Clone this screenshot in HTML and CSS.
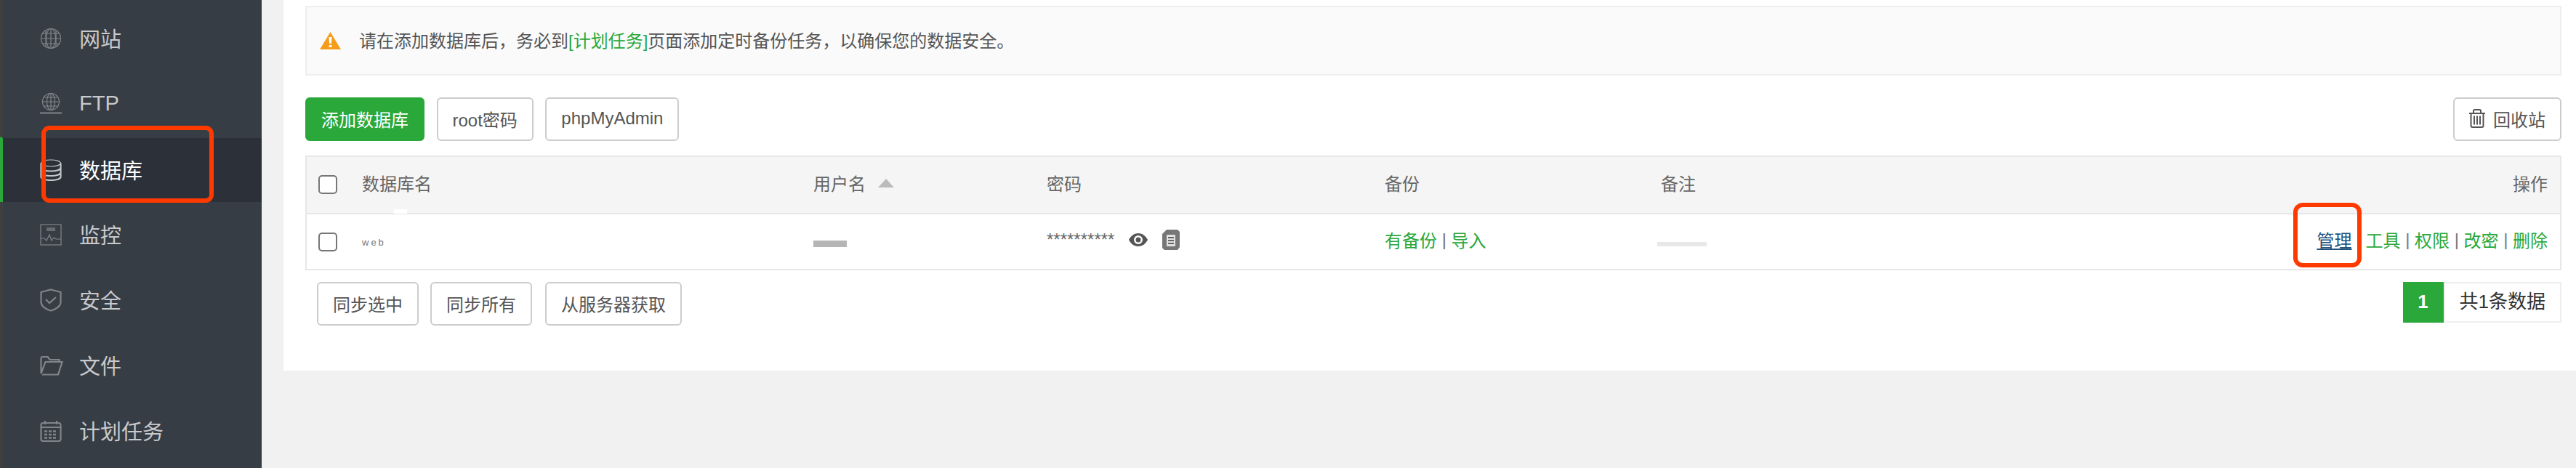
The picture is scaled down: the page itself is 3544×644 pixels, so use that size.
FILE: index.html
```html
<!DOCTYPE html>
<html lang="zh-CN">
<head>
	<meta charset="utf-8">
	<title>数据库管理</title>
	<link rel="stylesheet" href="styles.css">
</head>
<body>
	<div class="page">
		<div class="sidebar">
			<div class="menu-item">
				<svg class="menu-icon" viewBox="0 0 30 30"><circle cx="15" cy="15" r="13.5"/><ellipse cx="15" cy="15" rx="6.5" ry="13.5"/><path d="M15 1.5v27M3 8h24M1.5 15h27M3 22h24M8 3v24M22 3v24"/></svg>
				<span>网站</span>
			</div>
			<div class="menu-item">
				<svg class="menu-icon" viewBox="0 0 30 30"><circle cx="15" cy="12" r="11.5"/><ellipse cx="15" cy="12" rx="5.5" ry="11.5"/><path d="M15 .5v23M5 6h20M3.500 12h23M5 18h20"/><path class="thick" d="M0 27.500h30M11 27.500h8"/></svg>
				<span>FTP</span>
			</div>
			<div class="menu-item active">
				<svg class="menu-icon" viewBox="0 0 30 30"><ellipse cx="15" cy="5.500" rx="13.500" ry="4.500"/><path class="thick" d="M1.500 5.500v19c0 2.500 6 4.500 13.500 4.500s13.500-2 13.500-4.500v-19M1.500 12c0 2.500 6 4.500 13.500 4.500s13.500-2 13.500-4.500M1.500 18.500c0 2.500 6 4.500 13.500 4.500s13.500-2 13.500-4.500"/></svg>
				<span>数据库</span>
			</div>
			<div class="menu-item">
				<svg class="menu-icon" viewBox="0 0 30 30"><rect x="1" y="1" width="28" height="28"/><path d="M1 20h5l3 3 4-8 3 8 3-4 3 2h7"/><rect class="fill" x="9" y="5" width="12" height="5"/></svg>
				<span>监控</span>
			</div>
			<div class="menu-item">
				<svg class="menu-icon shield" viewBox="0 0 30 32"><path class="thick" d="M15 1.500 28.500 5v14c0 5-6 9.500-13.500 11.500C7.500 28.500 1.500 24 1.500 19V5z"/><path class="thick" d="m8 15 5 5 9-8"/></svg>
				<span>安全</span>
			</div>
			<div class="menu-item">
				<svg class="menu-icon folder" viewBox="0 0 32 27"><path class="thick" d="M1.500 24V3a2 2 0 0 1 2-2h7l3 4h13v3M3 25.500h22l5.500-17.500H7.500L1.500 24"/></svg>
				<span>文件</span>
			</div>
			<div class="menu-item">
				<svg class="menu-icon" viewBox="0 0 30 30"><rect class="thick" x="1.500" y="4" width="27" height="25" rx="3"/><path class="thick" d="M7 1v5M23 1v5M1.500 10h27"/><path class="dashes" d="M6 15.500h18M6 20h18M6 24.500h18"/></svg>
				<span>计划任务</span>
			</div>
		</div>

		<div class="main">
			<div class="panel">
				<div class="alert">
					<svg class="alert-icon" viewBox="0 0 29 24"><path class="alert-bg" d="M14.500 0 29 24H0z"/><path class="alert-mark" d="M12.500 7h4l-.6 9h-2.800zM12.700 18h3.600v3h-3.600z"/></svg>
					<span class="alert-text">请在添加数据库后，务必到<a class="green" href="#">[计划任务]</a>页面添加定时备份任务，以确保您的数据安全。</span>
				</div>

				<div class="toolbar">
					<button class="btn btn-green">添加数据库</button>
					<button class="btn">root密码</button>
					<button class="btn">phpMyAdmin</button>
					<button class="btn btn-recycle">
						<svg class="trash" viewBox="0 0 22 26"><path d="M0 6h22M6 6V2.500a1.500 1.500 0 0 1 1.500-1.500h7A1.500 1.500 0 0 1 16 2.500V6M2.500 6v17a2 2 0 0 0 2 2h13a2 2 0 0 0 2-2V6M7 9.500v12M11 9.500v12M15 9.500v12"/></svg>
						回收站
					</button>
				</div>

				<div class="table-box">
					<table>
						<colgroup>
							<col class="c-check"><col class="c-name"><col class="c-user"><col class="c-pass"><col class="c-backup"><col class="c-note"><col>
						</colgroup>
						<thead>
							<tr>
								<th><span class="check"></span></th>
								<th>数据库名<i class="patch"></i></th>
								<th>用户名<i class="sort"></i></th>
								<th>密码</th>
								<th>备份</th>
								<th>备注</th>
								<th class="right">操作</th>
							</tr>
						</thead>
						<tbody>
							<tr>
								<td><span class="check"></span></td>
								<td><span class="redact redact-name">web</span></td>
								<td><span class="redact redact-user"></span></td>
								<td>
									<div class="pass">
										<span class="stars">**********</span>
										<svg class="eye" viewBox="0 0 26 20"><path d="M13 1C7 1 2.500 5 0 10c2.500 5 7 9 13 9s10.500-4 13-9c-2.500-5-7-9-13-9zm0 15a6 6 0 1 1 0-12 6 6 0 0 1 0 12z"/><circle cx="13" cy="10" r="3.500"/></svg>
										<svg class="copy" viewBox="0 0 24 28"><path d="M6 0h15l3 3v21l-3 4H3l-3-3V6z"/><rect class="copy-page" x="6" y="7" width="12" height="16" rx="1"/><path class="copy-lines" d="M8 11h8M8 15h8M8 19h8"/></svg>
									</div>
								</td>
								<td>
									<div class="links"><a class="green" href="#">有备份</a><span class="sep">|</span><a class="green" href="#">导入</a></div>
								</td>
								<td><span class="redact redact-note"></span></td>
								<td>
									<div class="links ops">
										<a class="manage" href="#">管理</a>
										<a class="green first-op" href="#">工具</a><span class="sep">|</span>
										<a class="green" href="#">权限</a><span class="sep">|</span>
										<a class="green" href="#">改密</a><span class="sep">|</span>
										<a class="green" href="#">删除</a>
									</div>
								</td>
							</tr>
						</tbody>
					</table>
				</div>

				<div class="footer">
					<div class="footer-btns">
						<button class="btn">同步选中</button>
						<button class="btn">同步所有</button>
						<button class="btn btn-fetch">从服务器获取</button>
					</div>
					<div class="pager">
						<span class="pager-num">1</span>
						<span class="pager-total">共1条数据</span>
					</div>
				</div>
			</div>
		</div>

		<!-- annotations drawn on top of the screenshot -->
		<div class="mark mark-menu"></div>
		<div class="mark mark-manage"></div>
	</div>
</body>
</html>
```

FILE: styles.css
```css
* {
	box-sizing: border-box;
}
html, body {
	margin: 0;
	height: 100%;
	overflow: hidden;
}
body {
	background-color: #f1f1f1;
	font-family: "Liberation Sans", "Noto Sans CJK SC", sans-serif;
	font-size: 24px;
	color: #555;
}
a {
	text-decoration: none;
}
.page {
	position: relative;
	display: flex;
	height: 644px;
}

/* sidebar */
.sidebar {
	flex: none;
	width: 360px;
	padding-top: 8px;
	background-color: #373d45;
	border-left: 4px solid #3f3f3f;
}
.menu-item {
	display: flex;
	align-items: center;
	gap: 24px;
	height: 90px;
	padding-left: 51px;
	font-size: 29px;
	color: #c8c9cb;
}
.menu-item span {
	margin-bottom: 2px;
}
.menu-item.active {
	margin-left: -4px;
	padding-left: 51px;
	color: #fff;
	background-color: #2c3038;
	background-clip: padding-box;
	border-top: 2px solid #373d45;
	border-left: 4px solid #2aa83a;
}
.menu-icon {
	flex: none;
	width: 30px;
	height: 30px;
	fill: none;
	stroke: #80858a;
	stroke-width: 1.2;
}
.menu-icon .thick {
	stroke-width: 2.200;
}
.menu-icon .fill {
	fill: #676c72;
	stroke: none;
}
.menu-icon .dashes {
	stroke-width: 2.500;
	stroke-dasharray: 4 2;
}
.menu-icon.shield {
	height: 32px;
}
.menu-icon.folder {
	width: 32px;
	height: 27px;
	margin-right: -2px;
}
.active .menu-icon {
	stroke: #c4c6c9;
}

/* main panel */
.main {
	flex: 1;
	padding-left: 30px;
}
.panel {
	display: flex;
	flex-direction: column;
	height: 510px;
	padding: 8px 20px 0 30px;
	background-color: #fff;
}
.alert {
	display: flex;
	align-items: center;
	gap: 25px;
	height: 96px;
	margin-bottom: 30px;
	padding-left: 18px;
	background-color: #fafafa;
	border: 2px solid #eee;
}
.alert-text {
	margin-bottom: 3px;
}
.alert-icon {
	flex: none;
	width: 29px;
	height: 24px;
}
.alert-bg {
	fill: #f59c1a;
}
.alert-mark {
	fill: #fff;
}
.green {
	color: #2aa83a;
}

.toolbar {
	display: flex;
	gap: 16.5px;
	margin-bottom: 20px;
}
.btn {
	display: flex;
	align-items: center;
	height: 60px;
	padding: 0 20px 2px;
	font-family: inherit;
	font-size: 24px;
	color: #555;
	background-color: #fff;
	border: 2px solid #ccc;
	border-radius: 6px;
}
.btn-green {
	color: #fff;
	background-color: #2aa83a;
	border-color: #2aa83a;
}
.btn-recycle {
	gap: 11px;
	margin-left: auto;
}
.btn-fetch {
	margin-left: 2px;
}
.trash {
	width: 22px;
	height: 26px;
	fill: none;
	stroke: #555;
	stroke-width: 2;
}

/* table */
.table-box {
	border: 2px solid #e7e7e7;
	margin-bottom: 16px;
}
table {
	width: 100%;
	table-layout: fixed;
	border-collapse: collapse;
}
.c-check { width: 76px; }
.c-name { width: 621px; }
.c-user { width: 321px; }
.c-pass { width: 465px; }
.c-backup { width: 380px; }
.c-note { width: 700px; }
th {
	position: relative;
	height: 78px;
	padding: 0 0 6px;
	font-weight: normal;
	text-align: left;
	color: #666;
	background-color: #f5f5f5;
	border-bottom: 2px solid #e7e7e7;
}
td {
	height: 76px;
	padding: 0 0 6px;
}
th:first-child, td:first-child {
	padding: 0 0 2px 16px;
}
td:first-child {
	padding-bottom: 0;
}
th.right {
	padding-right: 17px;
	text-align: right;
}
.check {
	display: block;
	width: 26px;
	height: 26px;
	background-color: #fff;
	border: 2px solid #777;
	border-radius: 5px;
}
.sort {
	display: inline-block;
	margin-left: 17px;
	vertical-align: 4px;
	border-left: 11px solid transparent;
	border-right: 11px solid transparent;
	border-bottom: 12px solid #bbb;
}
.patch {
	position: absolute;
	left: 44px;
	bottom: -1px;
	width: 18px;
	height: 6px;
	background-color: #fff;
}
.redact {
	display: block;
}
.redact-name {
	width: 46px;
	margin-top: 8px;
	font-size: 13px;
	line-height: 13px;
	letter-spacing: 3px;
	color: #777;
}
.redact-user {
	width: 46px;
	height: 9px;
	margin-top: 12px;
	background-color: #b5b5b5;
}
.redact-note {
	width: 68px;
	height: 6px;
	margin: 12px 0 0 -5px;
	background-color: #e8e8e8;
}
.pass {
	display: flex;
	align-items: center;
	gap: 20px;
}
.stars {
	line-height: 20px;
	color: #666;
	white-space: nowrap;
}
.eye {
	width: 26px;
	height: 20px;
	fill: #555;
}
.copy {
	width: 24px;
	height: 28px;
	fill: #777;
}
.copy-page {
	fill: #e2e2e2;
}
.copy-lines {
	fill: none;
	stroke: #666;
	stroke-width: 2;
}
.links {
	display: flex;
	align-items: center;
}
.sep {
	width: 19.5px;
	text-align: center;
	color: #777;
}
.ops {
	justify-content: flex-end;
	padding-right: 17px;
}
.manage {
	color: #23527c;
	text-decoration: underline;
}
.first-op {
	margin-left: 19px;
}

/* footer */
.footer {
	display: flex;
	justify-content: space-between;
	align-items: flex-start;
	padding-left: 16px;
}
.footer-btns {
	display: flex;
	gap: 16px;
}
.pager {
	display: flex;
	height: 56px;
	font-size: 26px;
	line-height: 50px;
}
.pager-num {
	width: 56px;
	line-height: 54px;
	text-align: center;
	font-weight: bold;
	color: #fff;
	background-color: #2aa83a;
}
.pager-total {
	padding: 0 20px;
	color: #333;
	border: 2px solid #eee;
}

/* red annotation boxes */
.mark {
	position: absolute;
	border: 6px solid #ff3a00;
}
.mark-menu {
	left: 57px;
	top: 173px;
	width: 237px;
	height: 106px;
	border-radius: 11px;
}
.mark-manage {
	left: 3155px;
	top: 279px;
	width: 94px;
	height: 89px;
	border-radius: 13px;
}
```
